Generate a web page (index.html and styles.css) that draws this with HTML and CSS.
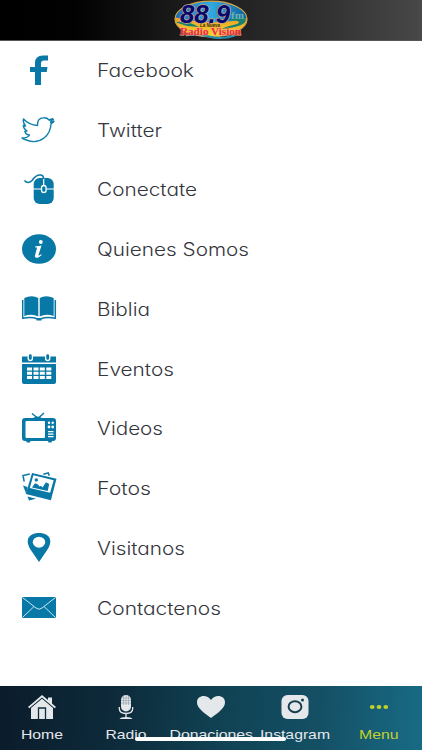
FILE: index.html
```html
<!DOCTYPE html>
<html lang="es">
<head>
<meta charset="utf-8">
<meta name="viewport" content="width=device-width">
<title>88.9 Radio Vision</title>
<link rel="stylesheet" href="styles.css">
</head>
<body>
<div class="app">
  <header class="header">
    <svg class="logo" viewBox="0 0 78 40">
      <defs>
        <clipPath id="oval"><ellipse cx="39" cy="19" rx="36" ry="17.800"/></clipPath>
        <linearGradient id="sky" x2="1"><stop stop-color="#1764b4"/><stop offset=".5" stop-color="#32a9df"/><stop offset="1" stop-color="#075b9c"/></linearGradient>
        <linearGradient id="sand" x2="0" y2="1"><stop stop-color="#ef9d22"/><stop offset="1" stop-color="#f5e232"/></linearGradient>
      </defs>
      <g clip-path="url(#oval)">
        <path d="M0 0h78v40H0z" fill="url(#sky)"/>
        <path d="M2 17Q40 27 76 18V40H2z" fill="url(#sand)"/>
        <path d="M50 20Q73 20 65 24Q52 27 50 29Q78 26 73 18z" fill="#168270"/>
        <path d="M3 22Q17 21 27 27L15 26z" fill="#168270"/>
      </g>
      <ellipse cx="39" cy="19" rx="36" ry="17.800" fill="none" stroke="#d6a64b" stroke-width="1.2"/>
      <path d="M14 35.500Q25 33 37 36.500T63 35.500" fill="none" stroke="#278fae" stroke-width="2"/>
      <text class="freq" x="8" y="22.5" textLength="50" lengthAdjust="spacingAndGlyphs">88.9</text>
      <text class="fm" x="59" y="18.500" textLength="13" lengthAdjust="spacingAndGlyphs">fm</text>
      <text class="nueva" x="28" y="27" textLength="20" lengthAdjust="spacingAndGlyphs">La Nueva</text>
      <text class="station" x="8" y="34.800" textLength="61" lengthAdjust="spacingAndGlyphs">Radio Vision</text>
    </svg>
  </header>

  <main class="list">
    <div class="row">
      <svg class="icon" viewBox="0 0 40 40"><path d="M17 35V22h-5v-5h5v-4q0-7.500 8-7.500h5v5h-4q-3 0-3 3V17h6.500l-.8 5H23v13z"/></svg>
      <svg class="label" viewBox="0 0 160 30"><text x="0" y="22" textLength="97" lengthAdjust="spacingAndGlyphs">Facebook</text></svg>
    </div>
    <div class="row">
      <svg class="icon line" viewBox="0 0 40 40"><path d="M5.500 9Q11 15 19.500 15.500Q19 8 25.500 7.800Q29 7.500 31 10L34.500 8.700L32.800 11.500L36 11.200L33 14Q32.500 23 26 28Q18 34 8.500 30Q5 29.300 4 28Q10 28 11.500 25Q8 25 6.800 21.500L9 21Q5.500 19 5.300 15.500L7.500 16Q4.500 12.500 5.500 9z"/><path d="M31 10l5-.5M32 12.500l4-.5"/></svg>
      <svg class="label" viewBox="0 0 160 30"><text x="0" y="22" textLength="65" lengthAdjust="spacingAndGlyphs">Twitter</text></svg>
    </div>
    <div class="row">
      <svg class="icon" viewBox="0 0 40 40"><rect x="15.700" y="9" width="20" height="26" rx="6"/><path class="cut" d="M15 20h21M25.700 8v8"/><path class="cable" d="M6.500 11.500Q10 15.500 14 11.500C17 7 20 5.500 23 6Q25.700 6.500 25.700 10"/><rect x="23.500" y="16.500" width="4.600" height="7" rx="2.300" stroke="#fff" stroke-width="1.300"/></svg>
      <svg class="label" viewBox="0 0 160 30"><text x="0" y="22" textLength="100" lengthAdjust="spacingAndGlyphs">Conectate</text></svg>
    </div>
    <div class="row">
      <svg class="icon" viewBox="0 0 40 40"><ellipse cx="21" cy="20" rx="17" ry="14.800"/><circle cx="22.800" cy="13" r="1.900" fill="#fff"/><path class="white" d="M17.500 17.300q3.500 0 6-.8l-3 9.500q-.3 1.500 2.600-.8l.7.700q-6 5.200-7 1.300l2.300-8.600h-2z"/></svg>
      <svg class="label" viewBox="0 0 160 30"><text x="0" y="22" textLength="152" lengthAdjust="spacingAndGlyphs">Quienes Somos</text></svg>
    </div>
    <div class="row">
      <svg class="icon" viewBox="0 0 40 40"><path d="M6.300 9Q14 5.500 20.300 9V27.500Q14 24.500 6.300 27zM21.700 9Q28 5.500 35.700 9V27Q28 24.500 21.700 27.500z"/><path class="thin" d="M4.700 11v18.200Q14 27.800 19 29.700h4q5-1.900 14.300-.5V11M18.500 30.700h5"/></svg>
      <svg class="label" viewBox="0 0 160 30"><text x="0" y="22" textLength="53" lengthAdjust="spacingAndGlyphs">Biblia</text></svg>
    </div>
    <div class="row">
      <svg class="icon" viewBox="0 0 40 40"><path d="M4 7.500h34v6H4zM4 15h34V33q0 2-2 2H6q-2 0-2-2z"/><rect class="ring" x="10.200" y="4.500" width="4.200" height="7" rx="2"/><rect class="ring" x="27.600" y="4.500" width="4.200" height="7" rx="2"/><path class="white" d="M9 18.500h5v3H9zm6.500 0h5v3h-5zm6.300 0h5v3h-5zm6.500 0h5v3h-5zM9 22.800h5v3H9zm6.500 0h5v3h-5zm6.300 0h5v3h-5zm6.500 0h5v3h-5zM9 27.100h5v3H9zm6.500 0h5v3h-5zm6.300 0h5v3h-5zm6.500 0h5v3h-5z"/></svg>
      <svg class="label" viewBox="0 0 160 30"><text x="0" y="22" textLength="77" lengthAdjust="spacingAndGlyphs">Eventos</text></svg>
    </div>
    <div class="row">
      <svg class="icon" viewBox="0 0 40 40"><path class="thin" d="M14 5.500l5 4M26 5l-5 4.500"/><path d="M15 10q4-3 9 0h11q3 0 3 3v17q0 3-3 3h-1l-.5 1.500h-3L30 33H12.500l-.5 1.500H9L8 33H7q-3 0-3-3V13q0-3 3-3z"/><rect class="white" x="7.500" y="13" width="19.500" height="17" rx="1"/><g class="white"><circle cx="31" cy="14.800" r="1.200"/><circle cx="34.700" cy="14.800" r="1.200"/><circle cx="31" cy="19" r="1.400"/><circle cx="34.700" cy="19" r="1.400"/><path d="M30 23h5.500v1.200H30zm0 2.500h5.500v1.200H30zm0 2.500h5.500v1.200H30z"/></g></svg>
      <svg class="label" viewBox="0 0 160 30"><text x="0" y="22" textLength="66" lengthAdjust="spacingAndGlyphs">Videos</text></svg>
    </div>
    <div class="row">
      <svg class="icon" viewBox="0 0 40 40"><path class="thin" d="M11.800 6L5 7.500l1.200 6M25.300 6.300l5-1.300.9 2.800"/><path d="M5 17.500l3.300 8.500L9.500 19zM9.500 28.500l1.500 4 7-1.800z"/><path d="M14 5l24.500 5.800-5.600 21.500L7.800 26z"/><path class="white" d="M15.400 7.300l20.300 5-3.600 12.500-20.300-4.900z"/><path d="M14 19.500l3-4.300 3 1.300 1.500 2 1.300-.7 1.700 1.700 3.500-5.300 3.200 1.800-1.500 7z"/><circle cx="18.300" cy="11.900" r="1.700"/></svg>
      <svg class="label" viewBox="0 0 160 30"><text x="0" y="22" textLength="54" lengthAdjust="spacingAndGlyphs">Fotos</text></svg>
    </div>
    <div class="row">
      <svg class="icon" viewBox="0 0 40 40"><path d="M21 34L12.500 21.500C5.500 10 13 5 21 5s15.500 5 8.500 16.500z"/><ellipse class="white" cx="21" cy="14.200" rx="6.200" ry="5.500"/></svg>
      <svg class="label" viewBox="0 0 160 30"><text x="0" y="22" textLength="88" lengthAdjust="spacingAndGlyphs">Visitanos</text></svg>
    </div>
    <div class="row">
      <svg class="icon" viewBox="0 0 40 40"><rect x="4" y="9" width="34" height="21" rx="1"/><path class="fold" d="M4.500 9.500L18 20q3 2.500 6 0L37.500 9.500M4.500 29.500l11.500-11M37.500 29.500L26 18.500"/></svg>
      <svg class="label" viewBox="0 0 160 30"><text x="0" y="22" textLength="124" lengthAdjust="spacingAndGlyphs">Contactenos</text></svg>
    </div>
  </main>

  <nav class="tabs">
    <div class="tab">
      <svg class="glyph" viewBox="0 0 30 28"><path d="M15 2L1 14l1.300 1.300L15 4.500l12.700 10.800L29 14l-4-3.500V4.500h-4V7z"/><path d="M4 15L15 5.800 26 15v11H4z"/><path class="door" d="M11.500 26V15h7v11"/></svg>
      <svg class="caption" viewBox="0 0 84 20"><text x="21" y="14" textLength="42" lengthAdjust="spacingAndGlyphs">Home</text></svg>
    </div>
    <div class="tab">
      <svg class="glyph" viewBox="0 0 30 28"><rect x="10" y="2" width="10" height="16.500" rx="5"/><path class="mesh" d="M10 5h10M10 7.500h10M10 10h10M12.500 3v9M15 2v10M17.500 3v9"/><path class="stand" d="M8.300 14v1.500q0 4.800 6.700 5 6.700-.2 6.700-5V14M15 21v4"/><path d="M8.500 26q1-2 6.500-2t6.500 2z"/></svg>
      <svg class="caption" viewBox="0 0 84 20"><text x="21.500" y="14" textLength="41" lengthAdjust="spacingAndGlyphs">Radio</text></svg>
    </div>
    <div class="tab">
      <svg class="glyph" viewBox="0 0 30 28"><path d="M15 25C9 20.500 1 15.500 1 9.500 1 2 11 1 15 7c4-6 14-5 14 2.500 0 6-8 11-14 15.500z"/></svg>
      <svg class="caption" viewBox="0 0 84 20"><text x="0.500" y="14" textLength="83.500" lengthAdjust="spacingAndGlyphs">Donaciones</text></svg>
    </div>
    <div class="tab">
      <svg class="glyph" viewBox="0 0 30 28"><rect x="1.500" y="2" width="27" height="24" rx="6"/><ellipse class="lens" cx="15" cy="13.700" rx="6.400" ry="5.500"/><circle class="dot" cx="22.500" cy="7" r="1.500"/></svg>
      <svg class="caption" viewBox="0 0 84 20"><text x="7" y="14" textLength="70" lengthAdjust="spacingAndGlyphs">Instagram</text></svg>
    </div>
    <div class="tab active">
      <svg class="glyph" viewBox="0 0 30 28"><ellipse cx="8.200" cy="14" rx="2.400" ry="2"/><ellipse cx="15" cy="14" rx="2.400" ry="2"/><ellipse cx="21.800" cy="14" rx="2.400" ry="2"/></svg>
      <svg class="caption" viewBox="0 0 84 20"><text x="22" y="14" textLength="39.500" lengthAdjust="spacingAndGlyphs">Menu</text></svg>
    </div>
    <div class="indicator"></div>
  </nav>
</div>
</body>
</html>
```
FILE: styles.css
```css
* { box-sizing: border-box; }
body { margin: 0; background: #fff; }
svg { display: block; flex: none; overflow: visible; }
.app { width: 422px; height: 750px; display: flex; flex-direction: column; overflow: hidden; }

.header {
  height: 41px;
  flex: none;
  display: flex;
  justify-content: center;
  background: linear-gradient(90deg, #000 0%, #020202 18%, #1b1b1b 43%, #292929 68%, #484848 100%);
  border-bottom: 1px solid #555;
}
.logo { width: 78px; height: 40px; }
.logo text { font-family: "Liberation Sans", Arial, sans-serif; font-weight: bold; }
.freq { font-size: 25px; font-style: italic; fill: #09096d; stroke: #c5a38b; stroke-width: 1.4px; paint-order: stroke; }
.logo .fm { font-family: "Liberation Serif", serif; font-size: 11px; fill: #6fb4a8; }
.logo .nueva { font-size: 4.5px; font-style: italic; fill: #302b16; }
.logo .station { font-family: "Liberation Serif", serif; font-size: 10.5px; fill: #ef2931; stroke: #f7a78b; stroke-width: .8px; paint-order: stroke; }

.list { flex: 1; display: flex; flex-direction: column; margin-top: -.9px; }
.row { height: 59.75px; flex: none; display: flex; align-items: center; padding-left: 18px; }
.icon { width: 40px; height: 40px; margin-right: 38.6px; fill: #0878a6; }
.icon .white { fill: #fff; }
.icon .cut { fill: none; stroke: #fff; stroke-width: 1.2; }
.icon .cable, .icon .thin { fill: none; stroke: #0878a6; stroke-width: 1.5; }
.icon .ring { stroke: #fff; stroke-width: 1.3; }
.icon .fold { fill: none; stroke: #c5e7f1; stroke-width: 1; }
.icon.line { fill: none; stroke: #0e80aa; stroke-width: 1.4; stroke-linejoin: round; }
.label { width: 160px; height: 30px; fill: #34363d; }
.label text { font: 400 18.3px Inter, "Open Sans", sans-serif; font-weight: 350; font-feature-settings: "cv11"; }

.tabs {
  position: relative;
  height: 64px;
  flex: none;
  display: flex;
  justify-content: space-between;
  padding-right: 1px;
  background: linear-gradient(93deg, #0b1c2b 0%, #0d2b3b 28%, #104253 52%, #145065 76%, #186b85 100%);
}
.tab { width: 84px; flex: none; display: flex; flex-direction: column; align-items: center; padding-top: 7px; fill: #e5e8eb; }
.tab.active { fill: #c3d02c; }
.glyph { width: 30px; height: 28px; }
.caption { width: 84px; height: 20px; margin-top: 3.5px; }
.caption text { font: 13.5px "Liberation Sans", Arial, sans-serif; }
.door { fill: none; stroke: #102d3d; stroke-width: 1.3; }
.mesh { fill: none; stroke: #8c9aa2; stroke-width: .6; }
.stand { fill: none; stroke: #e5e8eb; stroke-width: 1.3; }
.lens { fill: none; stroke: #153f50; stroke-width: 2; }
.dot { fill: #153f50; }
.indicator { position: absolute; left: 135px; top: 51px; width: 151px; height: 4px; border-radius: 2px; background: #fff; }
```
